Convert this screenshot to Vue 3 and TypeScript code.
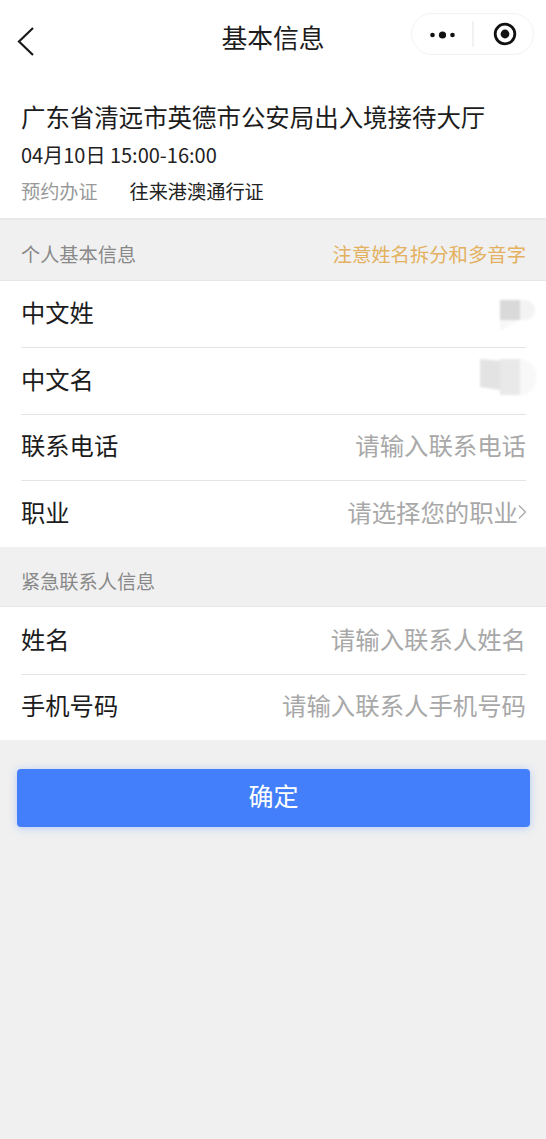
<script setup lang="ts">
interface Row { label: string; placeholder?: string; arrow?: boolean; mask?: 'a' | 'b' }
const personal: Row[] = [
  { label: '中文姓', mask: 'a' },
  { label: '中文名', mask: 'b' },
  { label: '联系电话', placeholder: '请输入联系电话' },
  { label: '职业', placeholder: '请选择您的职业', arrow: true },
]
const emergency: Row[] = [
  { label: '姓名', placeholder: '请输入联系人姓名' },
  { label: '手机号码', placeholder: '请输入联系人手机号码' },
]
</script>

<template>
  <div class="page">
    <header class="nav">
      <svg class="back" width="20" height="32" viewBox="0 0 20 32"><path d="M17 3 L3 16.5 L17 30" fill="none" stroke="#1a1a1a" stroke-width="2.2" /></svg>
      <h1 class="nav-title">基本信息</h1>
      <div class="capsule">
        <svg class="capsule-dots" width="25" height="10" viewBox="0 0 25 10"><circle cx="2.500" cy="5" r="2.300" fill="#111" /><circle cx="12.500" cy="5" r="3.600" fill="#111" /><circle cx="22.500" cy="5" r="2.300" fill="#111" /></svg>
        <span class="capsule-line"></span>
        <svg class="capsule-record" width="24" height="24" viewBox="0 0 24 24"><circle cx="12" cy="12" r="9.800" fill="none" stroke="#111" stroke-width="2.800" /><circle cx="12" cy="12" r="4.400" fill="#111" /></svg>
      </div>
    </header>

    <section class="info">
      <div class="hall">广东省清远市英德市公安局出入境接待大厅</div>
      <div class="time">04月10日 15:00-16:00</div>
      <div class="type"><span class="type-label">预约办证</span><span>往来港澳通行证</span></div>
    </section>

    <div class="section-head head-first">
      <span>个人基本信息</span>
      <span class="notice">注意姓名拆分和多音字</span>
    </div>
    <div class="rows">
      <div v-for="row in personal" :key="row.label" class="row">
        <span class="label">{{ row.label }}</span>
        <span v-if="row.placeholder" class="placeholder">{{ row.placeholder }}<svg v-if="row.arrow" class="chevron" width="9" height="16" viewBox="0 0 9 16"><path d="M1 1.500 L7.500 8 L1 14.500" fill="none" stroke="#a8a8a8" stroke-width="1.300" /></svg></span>
        <span v-if="row.mask" class="mask" :class="row.mask"><i></i><i></i><i></i></span>
      </div>
    </div>

    <div class="section-head head-second"><span>紧急联系人信息</span></div>
    <div class="rows">
      <div v-for="row in emergency" :key="row.label" class="row">
        <span class="label">{{ row.label }}</span>
        <span class="placeholder">{{ row.placeholder }}</span>
      </div>
    </div>

    <div class="action"><button class="confirm" type="button">确定</button></div>
  </div>
</template>

<style>
html, body { margin: 0; background: #f0f0f0; }
</style>

<style scoped>
.page {
  min-height: 1139px;
  background: #f0f0f0;
  font-family: "Noto Sans CJK SC", "Noto Sans", sans-serif;
  color: #1c1c1c;
  overflow: hidden;
}
.nav {
  position: relative;
  height: 78px;
  background: #fff;
  display: flex;
  align-items: center;
  justify-content: center;
}
.back { position: absolute; left: 16px; top: 25px; }
.nav-title { margin: 0 0 4px; font-size: 25.800px; line-height: 36px; font-weight: 400; }
.capsule {
  position: absolute;
  right: 12px;
  top: 13px;
  width: 123px;
  height: 42px;
  box-sizing: border-box;
  border: 1px solid #f3f3f3;
  border-radius: 21px;
  display: flex;
  align-items: center;
  padding: 0 0 0 18px;
}
.capsule-dots { display: block; margin-top: 2px; }
.capsule-line { width: 2px; height: 26px; background: #f2f2f2; margin-left: 17px; }
.capsule-record { display: block; margin-left: 19px; }
.info {
  background: #fff;
  padding: 21px 0 12px 21px;
  height: 107px;
  border-bottom: 2px solid #e9e9e9;
  box-sizing: content-box;
}
.hall { font-size: 24.450px; line-height: 36px; white-space: nowrap; }
.time { font-size: 20px; line-height: 28px; margin-top: 6px; color: #222; }
.type { font-size: 19.200px; line-height: 28px; margin-top: 8px; color: #222; }
.type-label { color: #999; display: inline-block; width: 108.500px; }
.section-head {
  display: flex;
  justify-content: space-between;
  align-items: center;
  padding: 0 20px 0 21px;
  font-size: 19.200px;
  color: #888;
  box-sizing: border-box;
}
.head-first { height: 60.500px; padding-top: 7.500px; border-bottom: 1px solid #e6e6e6; }
.head-second { height: 60.500px; padding-top: 10px; border-bottom: 1px solid #e6e6e6; }
.notice { color: #e3b15f; font-size: 19.350px; }
.rows { background: #fff; }
.row {
  position: relative;
  height: 66.500px;
  display: flex;
  align-items: center;
  justify-content: space-between;
  padding: 0 20px 3px 21px;
  box-sizing: border-box;
}
.row + .row::before {
  content: "";
  position: absolute;
  left: 21px;
  right: 20px;
  top: 0;
  height: 1px;
  background: #e4e4e4;
}
.label { font-size: 24.300px; line-height: 34px; color: #1c1c1c; }
.placeholder { font-size: 24.400px; line-height: 34px; color: #a8a8a8; display: flex; align-items: center; }
.chevron { margin-right: -1px; }
.mask { position: absolute; display: flex; filter: blur(1.2px); }
.mask i { display: block; }
.mask.a { left: 500px; top: 19px; }
.mask.a i:nth-child(1) { width: 20px; height: 20px; background: #d9d9d9; }
.mask.a i:nth-child(2) { width: 15px; height: 20px; background: #f3f3f3; border-radius: 0 10px 10px 0; }
.mask.a i:nth-child(3) {
  position: absolute;
  left: 0;
  top: 20px;
  width: 20px;
  height: 12px;
  background: #f8f8f8;
  clip-path: polygon(0 0, 100% 0, 0 100%);
}
.mask.b { left: 480px; top: 12px; }
.mask.b i:nth-child(1) { width: 20px; height: 31px; background: #e3e3e3; clip-path: polygon(0 0, 100% 6%, 100% 100%, 0 90%); }
.mask.b i:nth-child(2) { width: 20px; height: 36px; background: #e9e9e9; }
.mask.b i:nth-child(3) { width: 16px; height: 36px; background: #f8f8f8; border-radius: 0 18px 18px 0; }
.action { padding: 28.500px 16px 0 17px; }
.confirm {
  width: 100%;
  height: 58px;
  display: block;
  border: 0;
  border-radius: 4px;
  background: #437ffb;
  color: #fff;
  font-family: inherit;
  font-size: 25px;
  padding: 0 0 5px;
  box-shadow: 0 1px 9px rgba(67, 127, 251, 0.35);
}
</style>
